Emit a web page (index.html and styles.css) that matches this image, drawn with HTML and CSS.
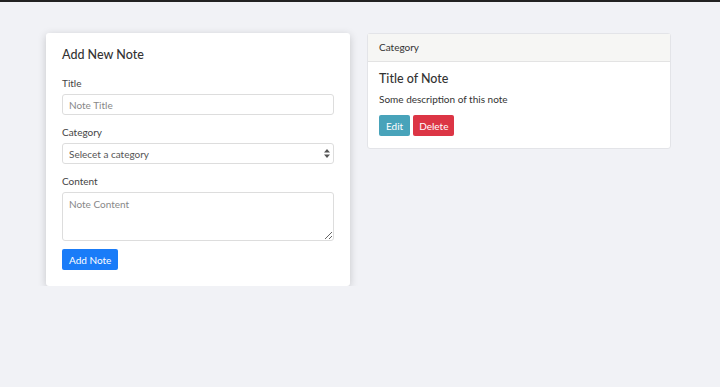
FILE: index.html
```html
<!DOCTYPE html>
<html lang="en">
<head>
	<meta charset="UTF-8">
	<title>Notes</title>
	<link rel="stylesheet" href="styles.css">
</head>
<body>
	<div class="topbar"></div>
	<div class="wrap">
		<div class="card form-card">
			<h2 class="form-title">Add New Note</h2>
			<form class="note-form">
				<div class="field">
					<label for="title">Title</label>
					<input id="title" class="control" type="text" placeholder="Note Title">
				</div>
				<div class="field">
					<label for="category">Category</label>
					<div class="select-box">
						<select id="category" class="control select">
							<option>Selecet a category</option>
						</select>
						<svg class="caret" width="6" height="9" viewBox="0 0 6 9"><path d="M0 3.5L3 0L6 3.5Z M0 5.5L3 9L6 5.5Z" fill="#555"/></svg>
					</div>
				</div>
				<div class="field">
					<label for="content">Content</label>
					<textarea id="content" class="control area" placeholder="Note Content"></textarea>
				</div>
				<button type="button" class="btn btn-primary">Add Note</button>
			</form>
		</div>

		<div class="card note-card">
			<div class="card-header">Category</div>
			<div class="card-body">
				<h3 class="note-title">Title of Note</h3>
				<p class="note-text">Some description of this note</p>
				<div class="actions">
					<button type="button" class="btn btn-info">Edit</button>
					<button type="button" class="btn btn-danger">Delete</button>
				</div>
			</div>
		</div>
	</div>
</body>
</html>
```
FILE: styles.css
```css
* {
	box-sizing: border-box;
}
body {
	margin: 0;
	background: #f1f2f6;
	font-family: Lato, "Noto Sans", sans-serif;
	font-size: 10px;
	line-height: 12px;
	color: #333;
}
.topbar {
	height: 2px;
	background: #222;
}
.wrap {
	display: flex;
	align-items: flex-start;
	gap: 17px;
	padding: 31px 0 0 46px;
}
.card {
	width: 304px;
	background: #fff;
	border-radius: 3px;
}
.form-card {
	padding: 14px 16px 16px;
	box-shadow: 0 2px 8px rgba(0, 0, 0, .18);
}
.form-title {
	margin: 0 0 15px;
	font-size: 12.5px;
	line-height: 15px;
	font-weight: 500;
	color: #333;
}
.field {
	margin-bottom: 11px;
}
.field label {
	display: block;
	margin-bottom: 5px;
	font-size: 10px;
	color: #444;
}
.control {
	display: block;
	width: 100%;
	height: 21px;
	padding: 0 6px;
	border: 1px solid #ddd;
	border-radius: 3px;
	background: #fff;
	font-family: inherit;
	font-size: 10px;
	color: #555;
	outline: none;
}
.control::placeholder {
	color: #888;
}
.select-box {
	position: relative;
}
.select {
	appearance: none;
	-webkit-appearance: none;
}
.caret {
	position: absolute;
	right: 4px;
	top: 6px;
}
.area {
	height: 49px;
	padding-top: 5px;
	resize: vertical;
}
.note-form .field:last-of-type {
	margin-bottom: 8px;
}
.btn {
	display: block;
	height: 21px;
	padding: 0 7px;
	border: 0;
	border-radius: 2px;
	font-family: inherit;
	font-size: 10px;
	color: #fff;
	cursor: pointer;
}
.btn-primary {
	background: #1a7cf8;
}
.btn-info {
	background: #48a3ba;
}
.btn-danger {
	background: #dc3545;
	padding: 0 6px;
}
.note-card {
	border: 1px solid #e3e4e8;
}
.card-header {
	height: 28px;
	line-height: 27px;
	padding: 0 11px;
	background: #f6f6f4;
	border-bottom: 1px solid #e3e3e3;
	font-size: 10px;
	color: #333;
}
.card-body {
	padding: 9px 11px 12px;
}
.note-title {
	margin: 0 0 7px;
	font-size: 12.5px;
	line-height: 15px;
	font-weight: 500;
	color: #333;
}
.note-text {
	margin: 0 0 10px;
	font-size: 10px;
	color: #333;
}
.actions {
	display: flex;
	gap: 3px;
}
```
